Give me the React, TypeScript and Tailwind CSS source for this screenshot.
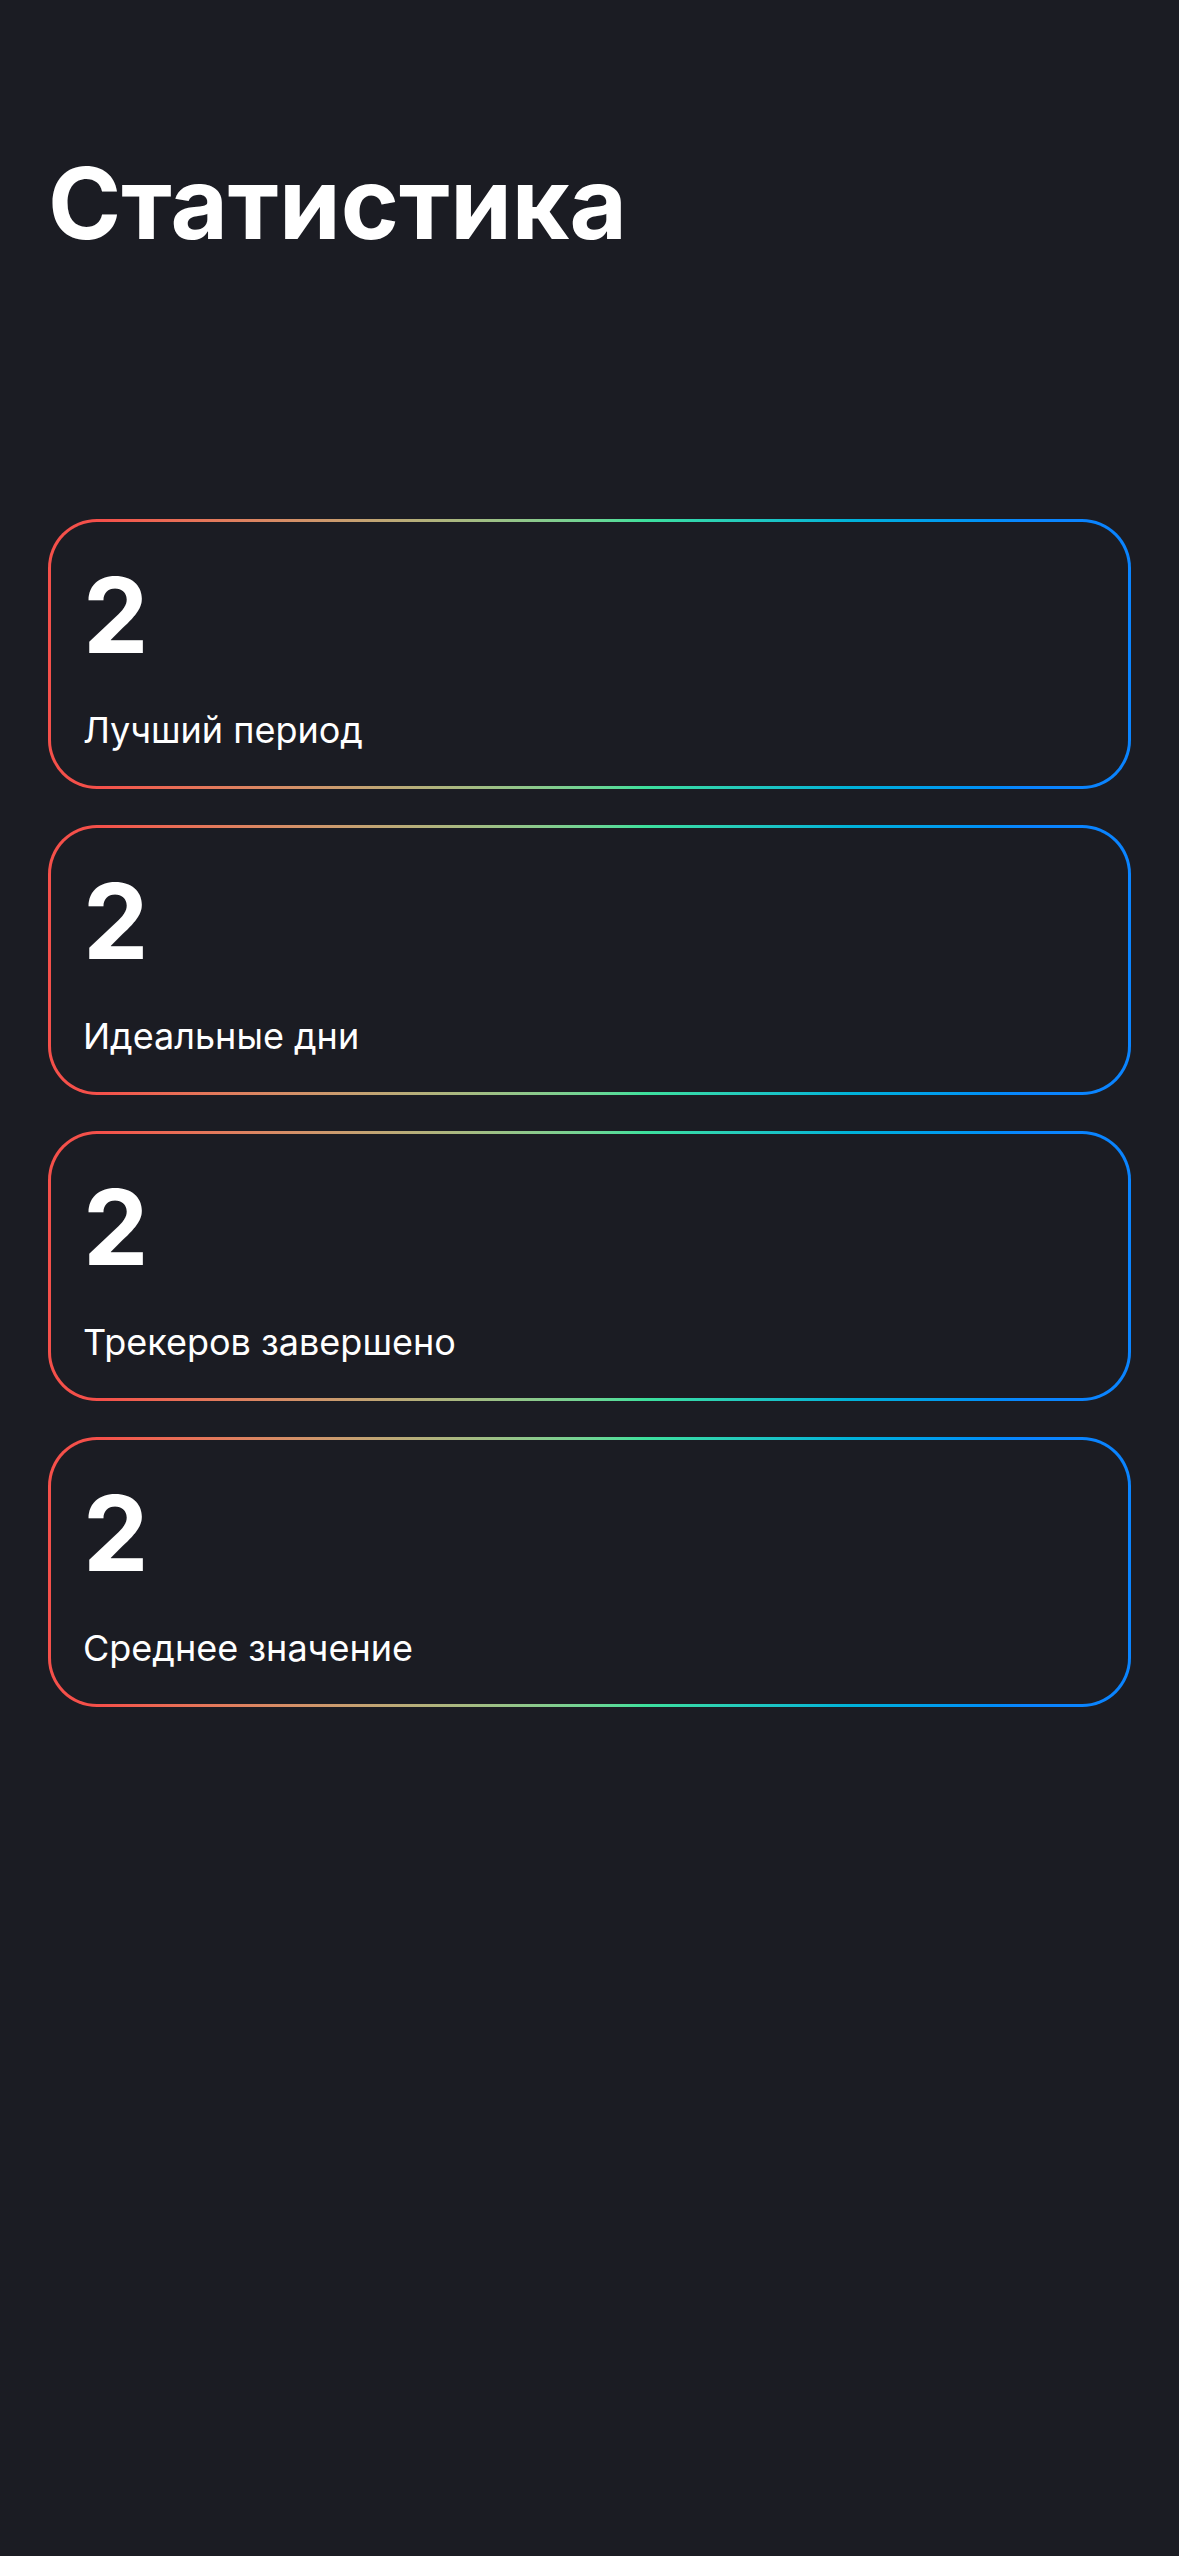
const stats = [
  { value: 2, label: "Лучший период" },
  { value: 2, label: "Идеальные дни" },
  { value: 2, label: "Трекеров завершено" },
  { value: 2, label: "Среднее значение" },
];

function StatCard({ value, label }: { value: number; label: string }) {
  return (
    <div className="rounded-[49px] bg-gradient-to-r from-[#f5504a] from-5% via-[#3ee09c] via-55% to-[#0a84ff] to-90% p-[3px]">
      <div className="rounded-[46px] bg-[#1b1c23] px-[32px] pt-[41px] pb-[37px]">
        <div className="text-[104px] font-bold leading-none text-white">{value}</div>
        <div className="mt-[45px] text-[36px] leading-[37px] text-white">{label}</div>
      </div>
    </div>
  );
}

export default function App() {
  return (
    <div
      className="min-h-[2556px] w-full bg-[#1b1c23] px-[48px] pt-[154px]"
      style={{ fontFamily: "Inter, 'Noto Sans', sans-serif" }}
    >
      <h1 className="text-[99px] font-bold leading-none text-white">Статистика</h1>

      <div className="mt-[266px] flex flex-col gap-[36px]">
        {stats.map((s) => (
          <StatCard key={s.label} value={s.value} label={s.label} />
        ))}
      </div>
    </div>
  );
}
